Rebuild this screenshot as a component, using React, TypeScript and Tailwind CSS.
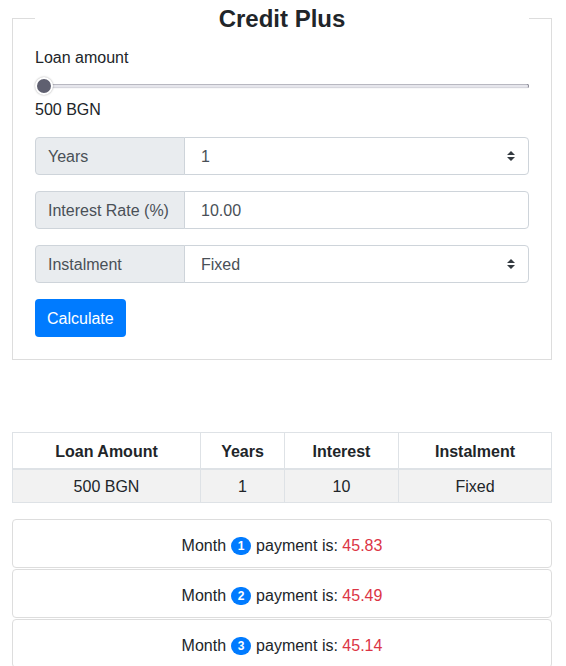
const payments = [
  { month: 1, amount: "45.83" },
  { month: 2, amount: "45.49" },
  { month: 3, amount: "45.14" },
];

function Arrows() {
  return (
    <svg
      className="pointer-events-none absolute right-[14px] top-1/2 -translate-y-1/2"
      width="8"
      height="10"
      viewBox="0 0 8 10"
    >
      <path d="M4 0 L8 4 H0 Z M4 10 L0 6 H8 Z" fill="#343a40" />
    </svg>
  );
}

function Group({ label, children }: { label: string; children: React.ReactNode }) {
  return (
    <div className="flex h-[38px] mb-4">
      <span className="flex items-center w-[150px] shrink-0 px-3 pt-[2px] bg-[#e9ecef] border border-[#ced4da] rounded-l-[4px] text-[#495057]">
        {label}
      </span>
      <div className="relative flex-1 -ml-px">{children}</div>
    </div>
  );
}

function App() {
  return (
    <div className="w-[566px] bg-white text-[16px] text-[#212529] font-['Liberation_Sans',Arial,sans-serif] pl-[12px] pr-[14px]">
      <fieldset className="border border-[#ddd] px-[22px] pb-[22px]">
        <legend className="w-full text-center font-bold text-[24px] leading-[36px] text-[#212529]">
          <span className="relative top-px">Credit Plus</span>
        </legend>
        <label className="block leading-6 mt-[9px] relative top-px">Loan amount</label>
        <div className="relative h-[18px] mt-[8px] mb-[2px]">
          <div className="absolute left-[4px] right-0 top-1/2 -translate-y-1/2 h-[5px] rounded-full bg-[#e6e6ec] border border-[#8a8a96] border-b-[#c8c8d0]" />
          <div className="absolute left-0 top-0 w-[18px] h-[18px] rounded-full bg-[#5f6070] border-2 border-white shadow-[0_0_2px_rgba(0,0,0,0.35)]" />
        </div>
        <div className="leading-6 relative top-px">500 BGN</div>

        <div className="mt-4">
          <Group label="Years">
            <select className="appearance-none w-full h-full bg-white border border-[#ced4da] rounded-r-[4px] pl-4 pt-[2px] text-[#495057] outline-none">
              <option>1</option>
            </select>
            <Arrows />
          </Group>
          <Group label="Interest Rate (%)">
            <input
              className="w-full h-full bg-white border border-[#ced4da] rounded-r-[4px] pl-4 pt-[2px] text-[#495057] outline-none"
              defaultValue="10.00"
            />
          </Group>
          <Group label="Instalment">
            <select className="appearance-none w-full h-full bg-white border border-[#ced4da] rounded-r-[4px] pl-4 pt-[2px] text-[#495057] outline-none">
              <option>Fixed</option>
            </select>
            <Arrows />
          </Group>
          <button className="h-[38px] px-3 pt-[2px] bg-[#007bff] text-white rounded-[4px]">
            Calculate
          </button>
        </div>
      </fieldset>

      <table className="w-full mt-[72px] border-collapse text-center">
        <thead>
          <tr className="h-[36px]">
            <th className="w-[188px] pt-[3px] border border-[#dee2e6] border-b-2 font-bold">Loan Amount</th>
            <th className="w-[84px] pt-[3px] border border-[#dee2e6] border-b-2 font-bold">Years</th>
            <th className="w-[114px] pt-[3px] border border-[#dee2e6] border-b-2 font-bold">Interest</th>
            <th className="pt-[3px] border border-[#dee2e6] border-b-2 font-bold">Instalment</th>
          </tr>
        </thead>
        <tbody>
          <tr className="h-[34px] bg-[#f2f2f2]">
            <td className="pt-[2px] border border-[#dee2e6]">500 BGN</td>
            <td className="pt-[2px] border border-[#dee2e6]">1</td>
            <td className="pt-[2px] border border-[#dee2e6]">10</td>
            <td className="pt-[2px] border border-[#dee2e6]">Fixed</td>
          </tr>
        </tbody>
      </table>

      <ul className="mt-4">
        {payments.map((p) => (
          <li
            key={p.month}
            className="flex items-center justify-center h-[49px] pt-[4px] mb-px border border-[#ddd] rounded-[4px] text-[#212529]"
          >
            Month
            <span className="inline-flex items-center justify-center mx-[5px] w-[20px] h-[18px] rounded-full bg-[#007bff] text-white text-[12px] font-bold">
              {p.month}
            </span>
            payment is:&nbsp;<span className="text-[#dc3545]">{p.amount}</span>
          </li>
        ))}
      </ul>
    </div>
  );
}

export default App;
